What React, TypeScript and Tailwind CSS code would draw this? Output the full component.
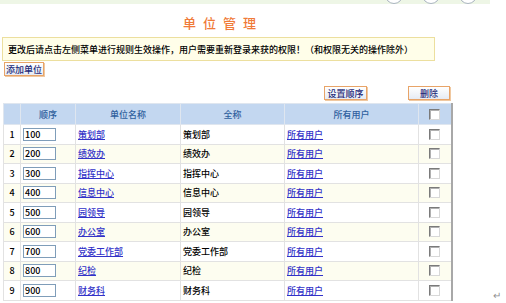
import React from "react";

const units = [
  { order: "100", name: "策划部" },
  { order: "200", name: "绩效办" },
  { order: "300", name: "指挥中心" },
  { order: "400", name: "信息中心" },
  { order: "500", name: "园领导" },
  { order: "600", name: "办公室" },
  { order: "700", name: "党委工作部" },
  { order: "800", name: "纪检" },
  { order: "900", name: "财务科" },
];

const Box = () => (
  <span className="inline-block h-[11px] w-[11px] border border-t-[#7a7a7a] border-l-[#7a7a7a] border-r-[#d8d8d8] border-b-[#d8d8d8] bg-white shadow-[inset_1px_1px_0_#b0b0b0]" />
);

const Btn = ({ label, w }: { label: string; w: string }) => (
  <button
    className={`${w} flex h-[14px] items-center justify-center whitespace-nowrap border border-[#e8a468] bg-gradient-to-b from-white to-[#e6ebf4] p-0 text-[9px] font-medium leading-none text-[#1e2a78] shadow-[1px_1px_0_#f0c8a0]`}
  >
    {label}
  </button>
);

const cell = "border border-[#e2e2e2] p-0 leading-none";

export default function App() {
  return (
    <div className="h-[303px] w-[506px] overflow-hidden bg-white font-['Noto_Sans_CJK_SC',sans-serif] text-[9px] font-medium leading-none text-black">
      {/* top strip */}
      <div className="flex h-[4px] w-[490px] justify-end gap-[19px] overflow-hidden bg-[#eef6e6] pr-[13px]">
        {[0, 1, 2].map((i) => (
          <span key={i} className="-mt-[14px] h-[18px] w-[18px] shrink-0 rounded-full border border-[#aab4c0] bg-white" />
        ))}
      </div>

      <div className="w-[446px] pt-[11px] text-center text-[13px] leading-[15px] tracking-[7px] text-[#f07a38]">
        单位管理
      </div>

      <div className="ml-[2px] mt-[7px] flex h-[24px] w-[433px] items-center whitespace-nowrap border border-[#ecdf9e] bg-[#fffee9] pl-[5px] text-[9px] leading-none">
        更改后请点击左侧菜单进行规则生效操作，用户需要重新登录来获的权限！（和权限无关的操作除外）
      </div>

      <div className="ml-[4px] mt-[1px]">
        <Btn label="添加单位" w="w-[40px]" />
      </div>

      <div className="mt-[10px] flex w-[451px] justify-end gap-[41px] pr-[1px]">
        <Btn label="设置顺序" w="w-[43px]" />
        <Btn label="删除" w="w-[42px]" />
      </div>

      <div className="ml-[3px] mt-[3px] flex items-end">
        <table className="w-[448px] shrink-0 table-fixed border-collapse border-r-2 border-r-[#a8a8a8]">
          <colgroup>
            <col className="w-[17px]" />
            <col className="w-[55px]" />
            <col className="w-[105px]" />
            <col className="w-[104px]" />
            <col className="w-[134px]" />
            <col className="w-[33px]" />
          </colgroup>
          <thead>
            <tr className="h-[21px] bg-[#c3d7f0] text-[#2f5f9e]">
              <th className="border border-[#dfe6ef] p-0 font-medium"></th>
              <th className="border border-[#dfe6ef] p-0 font-medium">顺序</th>
              <th className="border border-[#dfe6ef] p-0 font-medium">单位名称</th>
              <th className="border border-[#dfe6ef] p-0 font-medium">全称</th>
              <th className="border border-[#dfe6ef] p-0 font-medium">所有用户</th>
              <th className="border border-[#dfe6ef] p-0 font-medium">
                <div className="flex justify-center"><Box /></div>
              </th>
            </tr>
          </thead>
          <tbody>
            {units.map((u, i) => (
              <tr key={u.order} className={`h-[19.5px] ${i % 2 === 1 ? "bg-[#fdfdf0]" : "bg-white"}`}>
                <td className={`${cell} text-center`}>{i + 1}</td>
                <td className={`${cell} px-[2px]`}>
                  <div className="flex h-[13px] w-[33px] items-center border border-[#7f9db9] bg-white pl-[1px]">
                    {u.order}
                  </div>
                </td>
                <td className={`${cell} px-[2px]`}>
                  <a className="text-[#3232c8] underline">{u.name}</a>
                </td>
                <td className={`${cell} px-[2px]`}>{u.name}</td>
                <td className={`${cell} px-[2px]`}>
                  <a className="text-[#3232c8] underline">所有用户</a>
                </td>
                <td className={cell}>
                  <div className="flex justify-center"><Box /></div>
                </td>
              </tr>
            ))}
          </tbody>
        </table>
        <span className="mb-[1px] ml-[40px] text-[10px] leading-none text-[#909090]">↵</span>
      </div>
    </div>
  );
}
